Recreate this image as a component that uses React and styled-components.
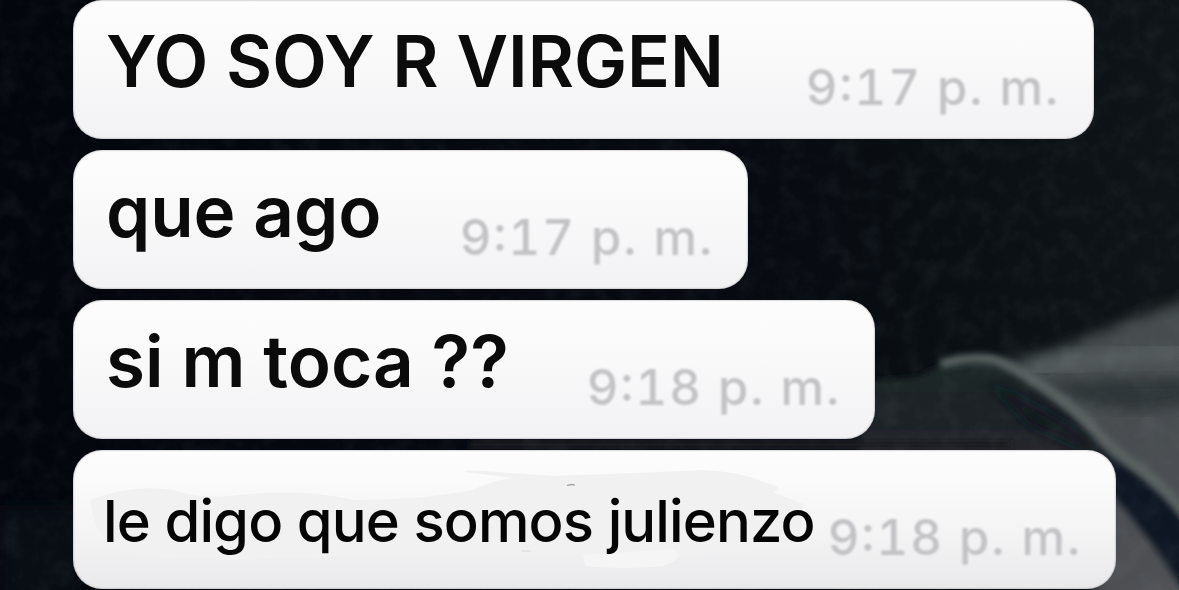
import React from "react";
import styled, { createGlobalStyle } from "styled-components";

const GlobalStyle = createGlobalStyle`
  * {
    box-sizing: border-box;
  }

  body {
    margin: 0;
    overflow: hidden;
    background: #05080d;
    font-family: Inter, "Liberation Sans", sans-serif;
  }
`;

const ChatContainer = styled.div`
  position: relative;
  width: 1179px;
  height: 590px;
  overflow: hidden;
`;

const Wallpaper = styled.svg`
  position: absolute;
  top: 0;
  left: 0;
`;

const Messages = styled.div`
  position: relative;
  display: flex;
  flex-direction: column;
  align-items: flex-start;
  gap: 11px;
  padding-left: 73px;
`;

const Bubble = styled.div`
  position: relative;
  display: flex;
  justify-content: space-between;
  width: ${(props) => props.$width}px;
  height: 139px;
  padding: 0 34px 0 ${(props) => (props.$edited ? 30 : 33)}px;
  border-radius: 29px;
  overflow: hidden;
  white-space: nowrap;
  background: ${(props) =>
    props.$edited
      ? "linear-gradient(#fdfdfe, #f5f5f6 55%, #e9e9eb)"
      : "linear-gradient(#fdfdfe, #f9f9fa 45%, #f2f2f4)"};
  box-shadow: inset 0 0 2px rgba(70, 70, 75, 0.65);
`;

const MessageText = styled.div`
  position: relative;
  margin-top: ${(props) => (props.$edited ? 31 : 21)}px;
  font-size: ${(props) => (props.$edited ? 58 : 71)}px;
  font-weight: ${(props) => (props.$edited ? 500 : 600)};
  line-height: 80px;
  letter-spacing: ${(props) => props.$spacing}px;
  color: ${(props) => (props.$edited ? "#050505" : "#0b0b0b")};
  filter: ${(props) => (props.$edited ? "none" : "blur(0.7px)")};
`;

const Time = styled.div`
  position: relative;
  margin-top: 58px;
  font-size: 49px;
  font-weight: 550;
  font-feature-settings: "tnum", "case";
  line-height: 60px;
  letter-spacing: 1.95px;
  color: #c3c3c6;
  filter: blur(0.8px);
`;

const Smudges = styled.svg`
  position: absolute;
  top: 0;
  left: 0;
`;

const messages = [
  { text: "YO SOY R VIRGEN", time: "9:17 p. m.", width: 1021, spacing: -0.05 },
  { text: "que ago", time: "9:17 p. m.", width: 675, spacing: -0.1 },
  { text: "si m toca ??", time: "9:18 p. m.", width: 802, spacing: 0 },
  {
    text: "le digo que somos julienzo",
    time: "9:18 p. m.",
    width: 1043,
    spacing: -0.9,
    edited: true,
  },
];

// Dark fabric with a lighter fold in the lower right corner
const Fabric = () => (
  <Wallpaper width="1179" height="590" viewBox="0 0 1179 590">
    <defs>
      <linearGradient id="base" x1="0" y1="0" x2="1" y2="0">
        <stop offset="0" stopColor="#03060c" />
        <stop offset="0.65" stopColor="#070b11" />
        <stop offset="1" stopColor="#0e1417" />
      </linearGradient>
      <linearGradient id="cloth" x1="0" y1="0" x2="0.6" y2="1">
        <stop offset="0" stopColor="#222b2d" />
        <stop offset="0.3" stopColor="#454c4e" />
        <stop offset="1" stopColor="#4f5154" />
      </linearGradient>
      <linearGradient id="shade" x1="0" y1="0" x2="0" y2="1">
        <stop offset="0" stopColor="#1f2829" />
        <stop offset="0.6" stopColor="#1c2227" />
        <stop offset="1" stopColor="#282a2e" />
      </linearGradient>
      <filter id="soft" x="-20%" y="-20%" width="140%" height="140%">
        <feGaussianBlur stdDeviation="7" />
      </filter>
      <filter id="edge" x="-20%" y="-20%" width="140%" height="140%">
        <feGaussianBlur stdDeviation="3" />
      </filter>
      <filter id="grain" x="0" y="0" width="100%" height="100%">
        <feTurbulence type="fractalNoise" baseFrequency="0.05" numOctaves="4" />
        <feColorMatrix values="0 0 0 0 0.42  0 0 0 0 0.5  0 0 0 0 0.52  0.7 0.7 0 0 -0.62" />
      </filter>
    </defs>
    <rect width="1179" height="590" fill="url(#base)" />
    <path
      d="M985 366 L1040 354 L1090 336 L1130 320 L1220 288 L1220 620 L1090 620 L1105 490 Z"
      fill="url(#cloth)"
      filter="url(#soft)"
    />
    <path
      d="M1030 369 Q1090 358 1200 350"
      stroke="#565d5e"
      strokeWidth="15"
      fill="none"
      filter="url(#soft)"
    />
    <path
      d="M1040 386 Q1080 378 1200 378 L1200 400 Q1130 418 1095 405 Z"
      fill="#2f3539"
      filter="url(#soft)"
    />
    <path
      d="M860 382 L920 377 Q950 356 995 358 L1070 413 L1110 458 L860 458 Z"
      fill="url(#shade)"
      filter="url(#edge)"
    />
    <path
      d="M985 379 Q1040 408 1090 438 L1100 455 L1030 425 Z"
      fill="#10161c"
      filter="url(#soft)"
    />
    <path
      d="M1100 450 Q1152 478 1200 540 L1205 625 Q1155 540 1108 490 Z"
      fill="#111820"
      filter="url(#edge)"
    />
    <path
      d="M940 364 Q985 352 1005 364 Q1048 385 1085 419 Q1115 453 1145 472 Q1168 489 1190 520"
      stroke="#5a6261"
      strokeWidth="9"
      fill="none"
      filter="url(#edge)"
    />
    <rect y="505" width="80" height="95" fill="#10141a" opacity="0.5" filter="url(#soft)" />
    <rect x="470" y="440" width="540" height="9" fill="#1b1c24" filter="url(#edge)" />
    <rect width="1179" height="590" filter="url(#grain)" opacity="0.13" />
  </Wallpaper>
);

const App = () => {
  return (
    <ChatContainer>
      <GlobalStyle />
      <Fabric />
      <Messages>
        {messages.map((message, index) => (
          <Bubble key={index} $width={message.width} $edited={message.edited}>
            {message.edited && (
              <Smudges width="1043" height="139" viewBox="0 0 1043 139">
                <path
                  d="M18 50 Q58 34 100 40 Q130 50 165 45 Q230 38 280 50 Q350 50 400 40 Q420 30 440 28 L392 22 Q390 19 410 21 L480 26 Q590 22 630 20 Q670 22 690 32 Q715 38 700 42 L730 54 L728 91 Q650 110 480 104 Q300 105 230 108 Q120 112 60 104 Q20 96 18 50 Z"
                  fill="#f1f1f2"
                />
                <path
                  d="M510 105 L600 99 Q615 108 590 116 Q550 120 512 116 Z"
                  fill="#f5f5f6"
                />
                <path d="M494 35.5 Q498 34 502 35" stroke="#9a9a9d" strokeWidth="1.2" fill="none" />
                <path d="M449 101 H458" stroke="#dadadd" strokeWidth="1" />
              </Smudges>
            )}
            <MessageText $edited={message.edited} $spacing={message.spacing}>
              {message.text}
            </MessageText>
            <Time>{message.time}</Time>
          </Bubble>
        ))}
      </Messages>
    </ChatContainer>
  );
};

export default App;
